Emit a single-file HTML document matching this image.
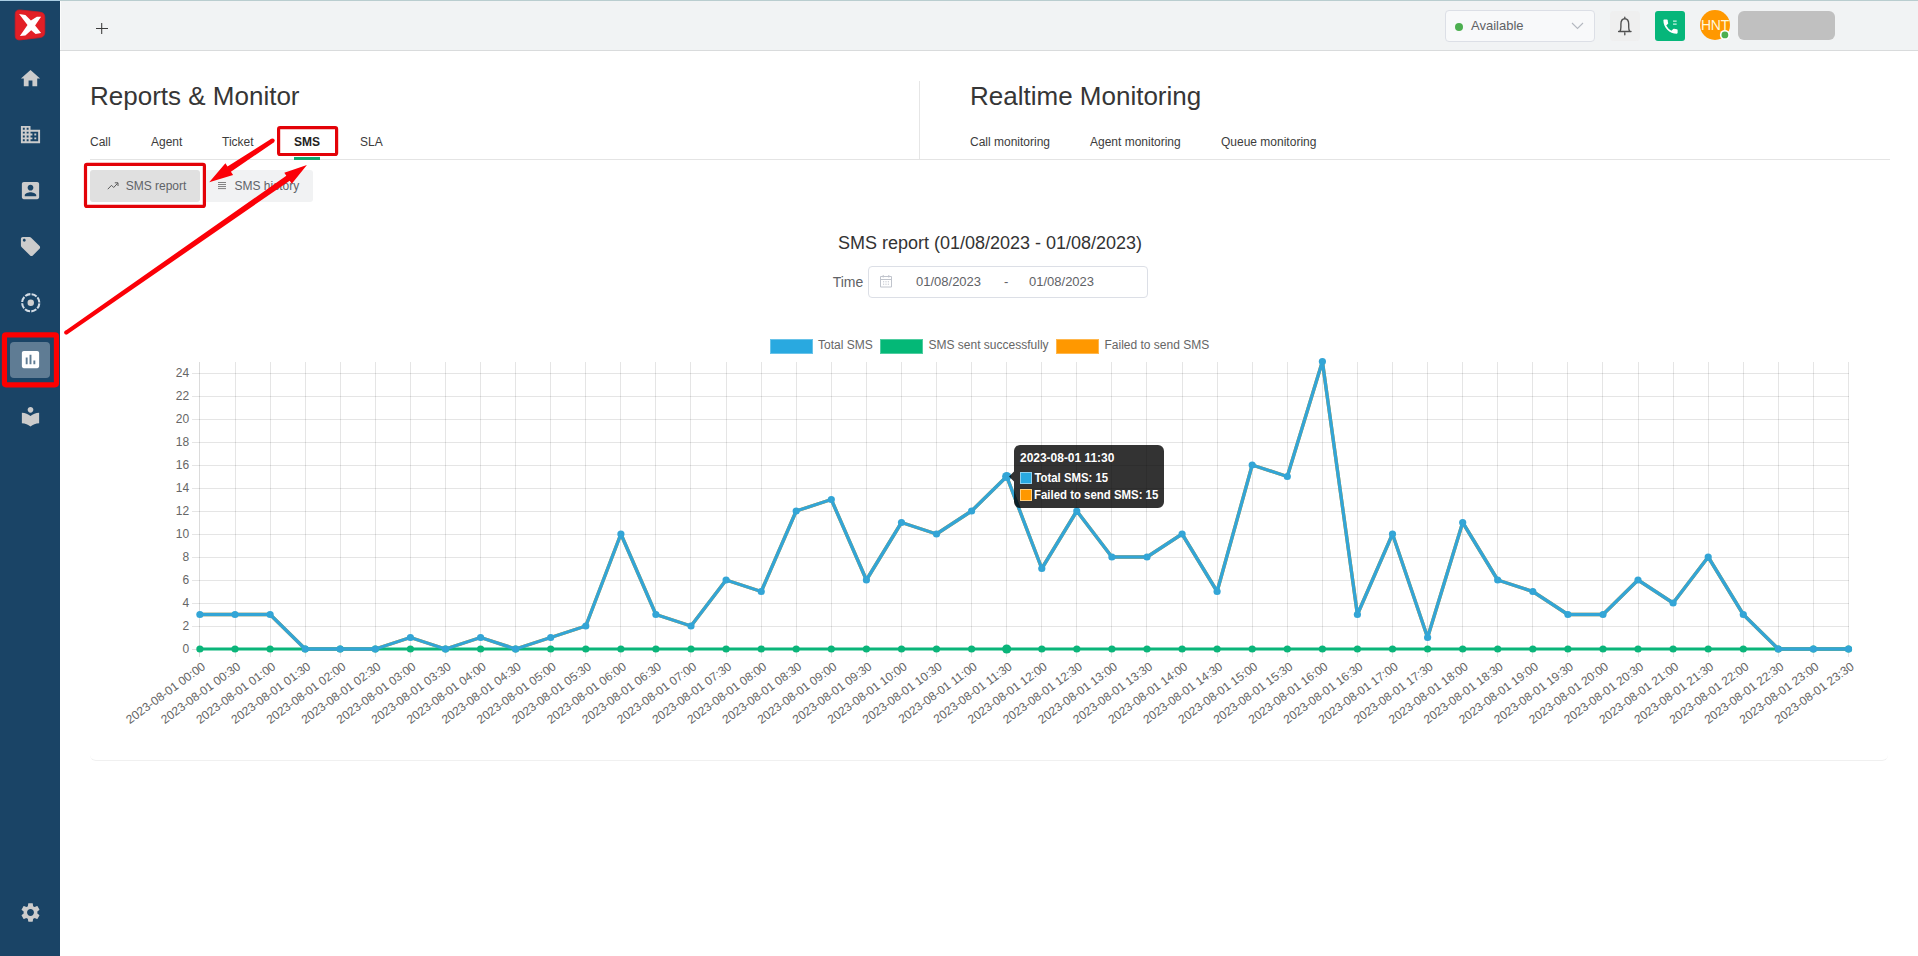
<!DOCTYPE html>
<html lang="en"><head><meta charset="utf-8"><title>Reports &amp; Monitor</title>
<style>
html,body{margin:0;padding:0}
body{width:1918px;height:956px;overflow:hidden;position:relative;background:#fff;font-family:"Liberation Sans",Arial,sans-serif;color:#333}
.abs,.si,.chart,.anno{position:absolute}
#side{position:absolute;left:0;top:0;width:60px;height:956px;background:#1a4466}
.act{position:absolute;left:10px;top:342px;width:40px;height:36px;border-radius:4px;background:rgba(255,255,255,0.3)}
#top{position:absolute;left:60px;top:0;width:1858px;height:50px;background:#f1f3f4;border-bottom:1px solid #d9dbdc;border-top:1px solid #b9cdcf;box-sizing:content-box;height:49px}
.t{position:absolute;white-space:nowrap;line-height:1}
.h1{font-size:26px;color:#363636}
.tab{font-size:12px;color:#3c3c3c}
.chart{left:0;top:0}
.chart .ax text{font-size:12px;fill:#666;font-family:"Liberation Sans",Arial,sans-serif}
.chart .tip text{font-size:12px;fill:#fff;font-family:"Liberation Sans",Arial,sans-serif}
.lg{top:338.500px;width:43px;height:15px;box-shadow:inset 0 0 0 1px rgba(255,255,255,0.3)}
.btn{position:absolute;top:170px;height:32px;border-radius:3px;box-sizing:border-box}
</style></head><body>
<div id="side">
<svg class="si" style="left:0;top:0" width="60" height="50" viewBox="0 0 60 50"><path d="M20.200 10 L39.800 12.100 Q44.800 12.600 44.800 17.500 L44.800 32.300 Q44.800 37 39.800 37.600 L20.200 39.900 Q15.200 40.400 15.200 35.400 L15.200 14.500 Q15.200 9.500 20.200 10Z" fill="#e21f26" stroke="#cf1c24" stroke-width="0.800"/><path d="M19.100 13.900L25.400 14.900L30.900 20.400L36.900 16.700L41.100 16.700L35.100 25.400L41.100 32.900L35.600 34L31.200 30.300L25.400 35.600L19.900 36.100L27.500 25.100Z" fill="#fff"/></svg>
<svg class="si" style="top:67.20px;left:18.50px" width="23" height="23" viewBox="0 0 24 24"><path fill="#ccc" d="M10 20v-6h4v6h5v-8h3L12 3 2 12h3v8z"/></svg>
<svg class="si" style="top:122.90px;left:18.50px" width="23" height="23" viewBox="0 0 24 24"><path fill="#ccc" d="M12 7V3H2v18h20V7H12zM6 19H4v-2h2v2zm0-4H4v-2h2v2zm0-4H4V9h2v2zm0-4H4V5h2v2zm4 12H8v-2h2v2zm0-4H8v-2h2v2zm0-4H8V9h2v2zm0-4H8V5h2v2zm10 12h-8v-2h2v-2h-2v-2h2v-2h-2V9h8v10zm-2-8h-2v2h2v-2zm0 4h-2v2h2v-2z"/></svg>
<svg class="si" style="top:179.00px;left:18.50px" width="23" height="23" viewBox="0 0 24 24"><path fill="#ccc" d="M3 5v14c0 1.1.89 2 2 2h14c1.1 0 2-.9 2-2V5c0-1.1-.9-2-2-2H5c-1.11 0-2 .9-2 2zm12 4c0 1.66-1.34 3-3 3s-3-1.34-3-3 1.34-3 3-3 3 1.34 3 3zm-9 8c0-2 4-3.1 6-3.1s6 1.1 6 3.100v1H6v-1z"/></svg>
<svg class="si" style="top:235.10px;left:18.50px" width="23" height="23" viewBox="0 0 24 24"><path fill="#ccc" d="M21.410 11.580l-9-9C12.050 2.220 11.550 2 11 2H4c-1.100 0-2 .9-2 2v7c0 .55.22 1.050.59 1.420l9 9c.36.36.86.58 1.410.58.55 0 1.050-.22 1.410-.59l7-7c.37-.36.59-.86.59-1.410 0-.55-.23-1.060-.59-1.420zM5.500 7C4.670 7 4 6.330 4 5.500S4.670 4 5.500 4 7 4.670 7 5.500 6.330 7 5.500 7z"/></svg>
<svg class="si" style="top:290.6px;left:18.95px" width="23.5" height="23.5" viewBox="0 0 24 24"><circle cx="12" cy="12" r="8.8" fill="none" stroke="#d4dde6" stroke-width="2.1" stroke-dasharray="5.6 1.31" stroke-dashoffset="-0.655"/><circle cx="12" cy="12" r="3.3" fill="#d0d0d0"/></svg>
<div class="act"></div>
<svg class="si" style="top:347.80px;left:18.50px" width="23" height="23" viewBox="0 0 24 24"><path fill="#fff" d="M19 3H5c-1.100 0-2 .9-2 2v14c0 1.100.9 2 2 2h14c1.100 0 2-.9 2-2V5c0-1.100-.9-2-2-2zM9 17H7v-7h2v7zm4 0h-2V7h2v10zm4 0h-2v-4h2v4z"/></svg>
<svg class="si" style="top:405.20px;left:18.50px" width="23" height="23" viewBox="0 0 24 24"><path fill="#ccc" d="M12 11.550C9.640 9.350 6.480 8 3 8v11c3.480 0 6.640 1.350 9 3.550 2.360-2.190 5.520-3.550 9-3.550V8c-3.480 0-6.640 1.350-9 3.550zM12 8c1.660 0 3-1.340 3-3s-1.340-3-3-3-3 1.340-3 3 1.340 3 3 3z"/></svg>
<svg class="si" style="top:901.20px;left:18.50px" width="23" height="23" viewBox="0 0 24 24"><path fill="#ccc" d="M19.140 12.940c.04-.3.06-.61.06-.94 0-.32-.02-.64-.07-.94l2.030-1.580c.18-.14.23-.41.12-.61l-1.920-3.320c-.12-.22-.37-.29-.59-.22l-2.390.96c-.5-.38-1.030-.7-1.620-.94l-.36-2.540c-.04-.24-.24-.41-.48-.41h-3.840c-.24 0-.43.17-.47.41l-.36 2.540c-.59.24-1.130.57-1.620.94l-2.390-.96c-.22-.08-.47 0-.59.22L2.740 8.870c-.12.21-.08.47.12.61l2.030 1.580c-.05.3-.09.63-.09.94s.02.64.07.94l-2.030 1.580c-.18.14-.23.41-.12.61l1.920 3.320c.12.22.37.29.59.22l2.390-.96c.5.38 1.030.7 1.620.94l.36 2.540c.05.24.24.41.48.41h3.840c.24 0 .44-.17.47-.41l.36-2.540c.59-.24 1.130-.56 1.620-.94l2.390.96c.22.08.47 0 .59-.22l1.920-3.320c.12-.22.07-.47-.12-.61l-2.010-1.580zM12 15.600c-1.980 0-3.600-1.620-3.600-3.600s1.620-3.600 3.600-3.600 3.600 1.620 3.600 3.600-1.620 3.600-3.600 3.600z"/></svg>
</div>
<div id="top"></div>
<div class="abs" style="left:0;top:0;width:60px;height:1px;background:#a9cde3"></div>
<div class="abs" style="left:60px;top:1px;width:1px;height:49px;background:#fbfcfc"></div>
<svg class="abs" style="left:96px;top:23px" width="12" height="12" viewBox="0 0 12 12"><path d="M5.700 0v11M0 5.500h12" stroke="#3c3c3c" stroke-width="1.050" fill="none"/></svg>

<div class="abs" style="left:1445px;top:10px;width:150px;height:31.500px;box-sizing:border-box;border:1px solid #dcdfe6;border-radius:4px;background:#f8f9fa"></div>
<div class="abs" style="left:1455px;top:23px;width:8px;height:8px;border-radius:50%;background:#4caf50"></div>
<div class="t" style="left:1471px;top:19px;font-size:13px;color:#606266">Available</div>
<svg class="abs" style="left:1571px;top:22px" width="13" height="8" viewBox="0 0 13 8"><path d="M1 1l5.500 5.500L12 1" fill="none" stroke="#b4b8c0" stroke-width="1.100"/></svg>

<div class="abs" style="left:1610px;top:11px;width:30px;height:30px;border-radius:4px;background:#efefef"></div>
<svg class="abs" style="left:1616px;top:16px" width="18" height="20" viewBox="0 0 18 20"><path d="M8.8 1.2v1.5M3.9 15.4c.9-1.2 1-2.6 1-4.400V8.2c0-3.300 1.500-5.500 3.900-5.500s3.900 2.200 3.900 5.500V11c0 1.800.1 3.200 1 4.400M2.600 15.500h12.400M8.800 17v1.700" fill="none" stroke="#505050" stroke-width="1.350" stroke-linecap="round"/></svg>

<div class="abs" style="left:1655px;top:11px;width:30px;height:30px;border-radius:3px;background:#06b67a"></div>
<svg class="abs" style="left:1660.600px;top:16.800px" width="19" height="19" viewBox="0 0 24 24"><path fill="#fff" d="M20 15.500c-1.250 0-2.450-.2-3.570-.57a1.020 1.020 0 0 0-1.020.24l-2.200 2.200a15.045 15.045 0 0 1-6.590-6.590l2.200-2.210a.96.960 0 0 0 .25-1A11.360 11.360 0 0 1 8.500 4c0-.55-.45-1-1-1H4c-.55 0-1 .45-1 1 0 9.390 7.610 17 17 17 .55 0 1-.45 1-1v-3.500c0-.55-.45-1-1-1z"/><path d="M15.200 5.200h4.600M15.200 9.100h4.600" stroke="#c8f3e2" stroke-width="1.600" fill="none"/></svg>

<div class="abs" style="left:1700px;top:10px;width:30px;height:30px;border-radius:50%;background:#ff9800"></div>
<div class="t" style="left:1700px;top:18px;width:30px;text-align:center;font-size:14px;color:#fff7dc;letter-spacing:-0.2px">HNT</div>
<svg class="abs" style="left:1719px;top:29px" width="12" height="12" viewBox="0 0 12 12"><circle cx="5.900" cy="5.900" r="5" fill="#fff"/><circle cx="5.900" cy="5.900" r="3.400" fill="#4caf50"/></svg>
<div class="abs" style="left:1738px;top:11px;width:97px;height:29px;border-radius:6px;background:#c0c0c0"></div>

<div class="t h1" style="left:90px;top:83px">Reports &amp; Monitor</div>
<div class="t h1" style="left:970px;top:83px">Realtime Monitoring</div>
<div class="abs" style="left:919px;top:81px;width:1px;height:78px;background:#e6e6e6"></div>
<div class="abs" style="left:90px;top:159px;width:1800px;height:1px;background:#e4e4e4"></div>
<div class="t tab" style="left:90px;top:136px">Call</div>
<div class="t tab" style="left:151px;top:136px">Agent</div>
<div class="t tab" style="left:222px;top:136px">Ticket</div>
<div class="t tab" style="left:294px;top:136px;font-weight:bold;color:#222">SMS</div>
<div class="t tab" style="left:360px;top:136px">SLA</div>
<div class="abs" style="left:294px;top:157px;width:26px;height:3px;background:#10a870"></div>
<div class="t tab" style="left:970px;top:136px">Call monitoring</div>
<div class="t tab" style="left:1090px;top:136px">Agent monitoring</div>
<div class="t tab" style="left:1221px;top:136px">Queue monitoring</div>

<div class="btn" style="left:90px;width:110px;background:#e0e0e0"></div>
<div class="btn" style="left:204px;width:109px;background:#f1f2f3"></div>
<svg class="abs" style="left:107.400px;top:180.800px" width="12" height="10" viewBox="0 0 12 10"><path d="M0.800 8.200l3.700-3.900 2.200 2.200 4-4.300M7.800 1.800h3.200v3.200" fill="none" stroke="#5a5a5a" stroke-width="1"/></svg>
<div class="t" style="left:125.700px;top:180px;font-size:12px;color:#5f6368">SMS report</div>
<svg class="abs" style="left:217px;top:181px" width="10" height="9" viewBox="0 0 10 9"><path d="M1 1.500h8M1 3.530h8M1 5.560h8M1 7.600h8" fill="none" stroke="#5c5c5c" stroke-width="0.750"/></svg>
<div class="t" style="left:234.500px;top:180px;font-size:12px;color:#5f6368">SMS history</div>

<div class="t" style="left:690px;top:234px;width:600px;text-align:center;font-size:18px;color:#333">SMS report (01/08/2023 - 01/08/2023)</div>
<div class="t" style="left:832.700px;top:275px;font-size:14px;color:#606266">Time</div>
<div class="abs" style="left:868px;top:266px;width:280px;height:32px;box-sizing:border-box;border:1px solid #dcdfe6;border-radius:4px;background:#fff"></div>
<svg class="abs" style="left:879px;top:274px" width="14" height="14" viewBox="0 0 14 14"><path d="M1.500 2.500h11v10.500h-11zM1.500 5.500h11M4.200 1v2.500M9.800 1v2.500M4 7.800h1.200M6.400 7.800h1.200M8.800 7.800h1.200M4 10.200h1.200M6.400 10.200h1.200M8.800 10.200h1.200" fill="none" stroke="#c0c4cc" stroke-width="1"/></svg>
<div class="t" style="left:916px;top:275px;font-size:13px;color:#606266">01/08/2023</div>
<div class="t" style="left:1004px;top:275px;font-size:13px;color:#606266">-</div>
<div class="t" style="left:1029px;top:275px;font-size:13px;color:#606266">01/08/2023</div>

<div class="abs lg" style="left:770px;background:#29a9e0"></div>
<div class="t" style="left:818px;top:338.600px;font-size:12px;color:#666">Total SMS</div>
<div class="abs lg" style="left:880px;background:#04b877"></div>
<div class="t" style="left:928.500px;top:338.600px;font-size:12px;color:#666">SMS sent successfully</div>
<div class="abs lg" style="left:1056px;background:#ff9800"></div>
<div class="t" style="left:1104.500px;top:338.600px;font-size:12px;color:#666">Failed to send SMS</div>

<div class="abs" style="left:90px;top:740px;width:1798px;height:20px;border-bottom:1px solid #f0f0f0;border-radius:0 0 6px 6px"></div>
<svg class="chart" width="1918" height="956" viewBox="0 0 1918 956">
<g shape-rendering="crispEdges"><line x1="199.5" y1="362" x2="199.5" y2="657" stroke="rgba(0,0,0,0.14)"/><line x1="235.5" y1="362" x2="235.5" y2="657" stroke="rgba(0,0,0,0.1)"/><line x1="270.5" y1="362" x2="270.5" y2="657" stroke="rgba(0,0,0,0.1)"/><line x1="305.5" y1="362" x2="305.5" y2="657" stroke="rgba(0,0,0,0.1)"/><line x1="340.5" y1="362" x2="340.5" y2="657" stroke="rgba(0,0,0,0.1)"/><line x1="375.5" y1="362" x2="375.5" y2="657" stroke="rgba(0,0,0,0.1)"/><line x1="410.5" y1="362" x2="410.5" y2="657" stroke="rgba(0,0,0,0.1)"/><line x1="445.5" y1="362" x2="445.5" y2="657" stroke="rgba(0,0,0,0.1)"/><line x1="480.5" y1="362" x2="480.5" y2="657" stroke="rgba(0,0,0,0.1)"/><line x1="515.5" y1="362" x2="515.5" y2="657" stroke="rgba(0,0,0,0.1)"/><line x1="550.5" y1="362" x2="550.5" y2="657" stroke="rgba(0,0,0,0.1)"/><line x1="585.5" y1="362" x2="585.5" y2="657" stroke="rgba(0,0,0,0.1)"/><line x1="620.5" y1="362" x2="620.5" y2="657" stroke="rgba(0,0,0,0.1)"/><line x1="655.5" y1="362" x2="655.5" y2="657" stroke="rgba(0,0,0,0.1)"/><line x1="690.5" y1="362" x2="690.5" y2="657" stroke="rgba(0,0,0,0.1)"/><line x1="726.5" y1="362" x2="726.5" y2="657" stroke="rgba(0,0,0,0.1)"/><line x1="761.5" y1="362" x2="761.5" y2="657" stroke="rgba(0,0,0,0.1)"/><line x1="796.5" y1="362" x2="796.5" y2="657" stroke="rgba(0,0,0,0.1)"/><line x1="831.5" y1="362" x2="831.5" y2="657" stroke="rgba(0,0,0,0.1)"/><line x1="866.5" y1="362" x2="866.5" y2="657" stroke="rgba(0,0,0,0.1)"/><line x1="901.5" y1="362" x2="901.5" y2="657" stroke="rgba(0,0,0,0.1)"/><line x1="936.5" y1="362" x2="936.5" y2="657" stroke="rgba(0,0,0,0.1)"/><line x1="971.5" y1="362" x2="971.5" y2="657" stroke="rgba(0,0,0,0.1)"/><line x1="1006.5" y1="362" x2="1006.5" y2="657" stroke="rgba(0,0,0,0.1)"/><line x1="1041.5" y1="362" x2="1041.5" y2="657" stroke="rgba(0,0,0,0.1)"/><line x1="1076.5" y1="362" x2="1076.5" y2="657" stroke="rgba(0,0,0,0.1)"/><line x1="1111.5" y1="362" x2="1111.5" y2="657" stroke="rgba(0,0,0,0.1)"/><line x1="1146.5" y1="362" x2="1146.5" y2="657" stroke="rgba(0,0,0,0.1)"/><line x1="1182.5" y1="362" x2="1182.5" y2="657" stroke="rgba(0,0,0,0.1)"/><line x1="1217.5" y1="362" x2="1217.5" y2="657" stroke="rgba(0,0,0,0.1)"/><line x1="1252.5" y1="362" x2="1252.5" y2="657" stroke="rgba(0,0,0,0.1)"/><line x1="1287.5" y1="362" x2="1287.5" y2="657" stroke="rgba(0,0,0,0.1)"/><line x1="1322.5" y1="362" x2="1322.5" y2="657" stroke="rgba(0,0,0,0.1)"/><line x1="1357.5" y1="362" x2="1357.5" y2="657" stroke="rgba(0,0,0,0.1)"/><line x1="1392.5" y1="362" x2="1392.5" y2="657" stroke="rgba(0,0,0,0.1)"/><line x1="1427.5" y1="362" x2="1427.5" y2="657" stroke="rgba(0,0,0,0.1)"/><line x1="1462.5" y1="362" x2="1462.5" y2="657" stroke="rgba(0,0,0,0.1)"/><line x1="1497.5" y1="362" x2="1497.5" y2="657" stroke="rgba(0,0,0,0.1)"/><line x1="1532.5" y1="362" x2="1532.5" y2="657" stroke="rgba(0,0,0,0.1)"/><line x1="1567.5" y1="362" x2="1567.5" y2="657" stroke="rgba(0,0,0,0.1)"/><line x1="1602.5" y1="362" x2="1602.5" y2="657" stroke="rgba(0,0,0,0.1)"/><line x1="1638.5" y1="362" x2="1638.5" y2="657" stroke="rgba(0,0,0,0.1)"/><line x1="1673.5" y1="362" x2="1673.5" y2="657" stroke="rgba(0,0,0,0.1)"/><line x1="1708.5" y1="362" x2="1708.5" y2="657" stroke="rgba(0,0,0,0.1)"/><line x1="1743.5" y1="362" x2="1743.5" y2="657" stroke="rgba(0,0,0,0.1)"/><line x1="1778.5" y1="362" x2="1778.5" y2="657" stroke="rgba(0,0,0,0.1)"/><line x1="1813.5" y1="362" x2="1813.5" y2="657" stroke="rgba(0,0,0,0.1)"/><line x1="1848.5" y1="362" x2="1848.5" y2="657" stroke="rgba(0,0,0,0.1)"/><line x1="192" y1="649.5" x2="1849" y2="649.5" stroke="rgba(0,0,0,0.12)"/><line x1="192" y1="626.5" x2="1849" y2="626.5" stroke="rgba(0,0,0,0.1)"/><line x1="192" y1="603.5" x2="1849" y2="603.5" stroke="rgba(0,0,0,0.1)"/><line x1="192" y1="580.5" x2="1849" y2="580.5" stroke="rgba(0,0,0,0.1)"/><line x1="192" y1="557.5" x2="1849" y2="557.5" stroke="rgba(0,0,0,0.1)"/><line x1="192" y1="534.5" x2="1849" y2="534.5" stroke="rgba(0,0,0,0.1)"/><line x1="192" y1="511.5" x2="1849" y2="511.5" stroke="rgba(0,0,0,0.1)"/><line x1="192" y1="488.5" x2="1849" y2="488.5" stroke="rgba(0,0,0,0.1)"/><line x1="192" y1="465.5" x2="1849" y2="465.5" stroke="rgba(0,0,0,0.1)"/><line x1="192" y1="442.5" x2="1849" y2="442.5" stroke="rgba(0,0,0,0.1)"/><line x1="192" y1="419.5" x2="1849" y2="419.5" stroke="rgba(0,0,0,0.1)"/><line x1="192" y1="396.5" x2="1849" y2="396.5" stroke="rgba(0,0,0,0.1)"/><line x1="192" y1="373.5" x2="1849" y2="373.5" stroke="rgba(0,0,0,0.1)"/></g>
<g class="ax"><text x="189.100" y="652.6" text-anchor="end">0</text><text x="189.100" y="629.6" text-anchor="end">2</text><text x="189.100" y="606.6" text-anchor="end">4</text><text x="189.100" y="583.6" text-anchor="end">6</text><text x="189.100" y="560.6" text-anchor="end">8</text><text x="189.100" y="537.6" text-anchor="end">10</text><text x="189.100" y="514.6" text-anchor="end">12</text><text x="189.100" y="491.6" text-anchor="end">14</text><text x="189.100" y="468.6" text-anchor="end">16</text><text x="189.100" y="445.6" text-anchor="end">18</text><text x="189.100" y="422.6" text-anchor="end">20</text><text x="189.100" y="399.6" text-anchor="end">22</text><text x="189.100" y="376.6" text-anchor="end">24</text></g>
<g class="ax"><text transform="translate(206.2,668.2) rotate(-36.2)" text-anchor="end">2023-08-01 00:00</text><text transform="translate(241.3,668.2) rotate(-36.2)" text-anchor="end">2023-08-01 00:30</text><text transform="translate(276.4,668.2) rotate(-36.2)" text-anchor="end">2023-08-01 01:00</text><text transform="translate(311.5,668.2) rotate(-36.2)" text-anchor="end">2023-08-01 01:30</text><text transform="translate(346.6,668.2) rotate(-36.2)" text-anchor="end">2023-08-01 02:00</text><text transform="translate(381.6,668.2) rotate(-36.2)" text-anchor="end">2023-08-01 02:30</text><text transform="translate(416.7,668.2) rotate(-36.2)" text-anchor="end">2023-08-01 03:00</text><text transform="translate(451.8,668.2) rotate(-36.2)" text-anchor="end">2023-08-01 03:30</text><text transform="translate(486.9,668.2) rotate(-36.2)" text-anchor="end">2023-08-01 04:00</text><text transform="translate(521.9,668.2) rotate(-36.2)" text-anchor="end">2023-08-01 04:30</text><text transform="translate(557.0,668.2) rotate(-36.2)" text-anchor="end">2023-08-01 05:00</text><text transform="translate(592.1,668.2) rotate(-36.2)" text-anchor="end">2023-08-01 05:30</text><text transform="translate(627.1,668.2) rotate(-36.2)" text-anchor="end">2023-08-01 06:00</text><text transform="translate(662.2,668.2) rotate(-36.2)" text-anchor="end">2023-08-01 06:30</text><text transform="translate(697.3,668.2) rotate(-36.2)" text-anchor="end">2023-08-01 07:00</text><text transform="translate(732.4,668.2) rotate(-36.2)" text-anchor="end">2023-08-01 07:30</text><text transform="translate(767.5,668.2) rotate(-36.2)" text-anchor="end">2023-08-01 08:00</text><text transform="translate(802.5,668.2) rotate(-36.2)" text-anchor="end">2023-08-01 08:30</text><text transform="translate(837.6,668.2) rotate(-36.2)" text-anchor="end">2023-08-01 09:00</text><text transform="translate(872.7,668.2) rotate(-36.2)" text-anchor="end">2023-08-01 09:30</text><text transform="translate(907.8,668.2) rotate(-36.2)" text-anchor="end">2023-08-01 10:00</text><text transform="translate(942.8,668.2) rotate(-36.2)" text-anchor="end">2023-08-01 10:30</text><text transform="translate(977.9,668.2) rotate(-36.2)" text-anchor="end">2023-08-01 11:00</text><text transform="translate(1013.0,668.2) rotate(-36.2)" text-anchor="end">2023-08-01 11:30</text><text transform="translate(1048.0,668.2) rotate(-36.2)" text-anchor="end">2023-08-01 12:00</text><text transform="translate(1083.1,668.2) rotate(-36.2)" text-anchor="end">2023-08-01 12:30</text><text transform="translate(1118.2,668.2) rotate(-36.2)" text-anchor="end">2023-08-01 13:00</text><text transform="translate(1153.3,668.2) rotate(-36.2)" text-anchor="end">2023-08-01 13:30</text><text transform="translate(1188.4,668.2) rotate(-36.2)" text-anchor="end">2023-08-01 14:00</text><text transform="translate(1223.4,668.2) rotate(-36.2)" text-anchor="end">2023-08-01 14:30</text><text transform="translate(1258.5,668.2) rotate(-36.2)" text-anchor="end">2023-08-01 15:00</text><text transform="translate(1293.6,668.2) rotate(-36.2)" text-anchor="end">2023-08-01 15:30</text><text transform="translate(1328.7,668.2) rotate(-36.2)" text-anchor="end">2023-08-01 16:00</text><text transform="translate(1363.7,668.2) rotate(-36.2)" text-anchor="end">2023-08-01 16:30</text><text transform="translate(1398.8,668.2) rotate(-36.2)" text-anchor="end">2023-08-01 17:00</text><text transform="translate(1433.9,668.2) rotate(-36.2)" text-anchor="end">2023-08-01 17:30</text><text transform="translate(1469.0,668.2) rotate(-36.2)" text-anchor="end">2023-08-01 18:00</text><text transform="translate(1504.0,668.2) rotate(-36.2)" text-anchor="end">2023-08-01 18:30</text><text transform="translate(1539.1,668.2) rotate(-36.2)" text-anchor="end">2023-08-01 19:00</text><text transform="translate(1574.2,668.2) rotate(-36.2)" text-anchor="end">2023-08-01 19:30</text><text transform="translate(1609.2,668.2) rotate(-36.2)" text-anchor="end">2023-08-01 20:00</text><text transform="translate(1644.3,668.2) rotate(-36.2)" text-anchor="end">2023-08-01 20:30</text><text transform="translate(1679.4,668.2) rotate(-36.2)" text-anchor="end">2023-08-01 21:00</text><text transform="translate(1714.5,668.2) rotate(-36.2)" text-anchor="end">2023-08-01 21:30</text><text transform="translate(1749.6,668.2) rotate(-36.2)" text-anchor="end">2023-08-01 22:00</text><text transform="translate(1784.6,668.2) rotate(-36.2)" text-anchor="end">2023-08-01 22:30</text><text transform="translate(1819.7,668.2) rotate(-36.2)" text-anchor="end">2023-08-01 23:00</text><text transform="translate(1854.8,668.2) rotate(-36.2)" text-anchor="end">2023-08-01 23:30</text></g>
<polyline points="199.9,614.5 235.0,614.5 270.1,614.5 305.2,649.0 340.2,649.0 375.3,649.0 410.4,637.5 445.5,649.0 480.6,637.5 515.6,649.0 550.7,637.5 585.8,626.0 620.9,534.0 655.9,614.5 691.0,626.0 726.1,580.0 761.2,591.5 796.2,511.0 831.3,499.5 866.4,580.0 901.5,522.5 936.5,534.0 971.6,511.0 1006.7,476.5 1041.8,568.5 1076.8,511.0 1111.9,557.0 1147.0,557.0 1182.1,534.0 1217.1,591.5 1252.2,465.0 1287.3,476.5 1322.4,361.5 1357.4,614.5 1392.5,534.0 1427.6,637.5 1462.7,522.5 1497.7,580.0 1532.8,591.5 1567.9,614.5 1603.0,614.5 1638.0,580.0 1673.1,603.0 1708.2,557.0 1743.3,614.5 1778.3,649.0 1813.4,649.0 1848.5,649.0" fill="none" stroke="#ff9800" stroke-width="3.400" stroke-linejoin="round"/>
<line x1="199.95" y1="649.05" x2="1848.4750000000001" y2="649.05" stroke="#0bb57a" stroke-width="3"/>
<g fill="#0bb57a"><circle cx="199.9" cy="649.0" r="3.6"/><circle cx="235.0" cy="649.0" r="3.6"/><circle cx="270.1" cy="649.0" r="3.6"/><circle cx="305.2" cy="649.0" r="3.6"/><circle cx="340.2" cy="649.0" r="3.6"/><circle cx="375.3" cy="649.0" r="3.6"/><circle cx="410.4" cy="649.0" r="3.6"/><circle cx="445.5" cy="649.0" r="3.6"/><circle cx="480.6" cy="649.0" r="3.6"/><circle cx="515.6" cy="649.0" r="3.6"/><circle cx="550.7" cy="649.0" r="3.6"/><circle cx="585.8" cy="649.0" r="3.6"/><circle cx="620.9" cy="649.0" r="3.6"/><circle cx="655.9" cy="649.0" r="3.6"/><circle cx="691.0" cy="649.0" r="3.6"/><circle cx="726.1" cy="649.0" r="3.6"/><circle cx="761.2" cy="649.0" r="3.6"/><circle cx="796.2" cy="649.0" r="3.6"/><circle cx="831.3" cy="649.0" r="3.6"/><circle cx="866.4" cy="649.0" r="3.6"/><circle cx="901.5" cy="649.0" r="3.6"/><circle cx="936.5" cy="649.0" r="3.6"/><circle cx="971.6" cy="649.0" r="3.6"/><circle cx="1006.7" cy="649.0" r="4.6"/><circle cx="1041.8" cy="649.0" r="3.6"/><circle cx="1076.8" cy="649.0" r="3.6"/><circle cx="1111.9" cy="649.0" r="3.6"/><circle cx="1147.0" cy="649.0" r="3.6"/><circle cx="1182.1" cy="649.0" r="3.6"/><circle cx="1217.1" cy="649.0" r="3.6"/><circle cx="1252.2" cy="649.0" r="3.6"/><circle cx="1287.3" cy="649.0" r="3.6"/><circle cx="1322.4" cy="649.0" r="3.6"/><circle cx="1357.4" cy="649.0" r="3.6"/><circle cx="1392.5" cy="649.0" r="3.6"/><circle cx="1427.6" cy="649.0" r="3.6"/><circle cx="1462.7" cy="649.0" r="3.6"/><circle cx="1497.7" cy="649.0" r="3.6"/><circle cx="1532.8" cy="649.0" r="3.6"/><circle cx="1567.9" cy="649.0" r="3.6"/><circle cx="1603.0" cy="649.0" r="3.6"/><circle cx="1638.0" cy="649.0" r="3.6"/><circle cx="1673.1" cy="649.0" r="3.6"/><circle cx="1708.2" cy="649.0" r="3.6"/><circle cx="1743.3" cy="649.0" r="3.6"/><circle cx="1778.3" cy="649.0" r="3.6"/><circle cx="1813.4" cy="649.0" r="3.6"/><circle cx="1848.5" cy="649.0" r="3.6"/></g>
<polyline points="199.9,614.5 235.0,614.5 270.1,614.5 305.2,649.0 340.2,649.0 375.3,649.0 410.4,637.5 445.5,649.0 480.6,637.5 515.6,649.0 550.7,637.5 585.8,626.0 620.9,534.0 655.9,614.5 691.0,626.0 726.1,580.0 761.2,591.5 796.2,511.0 831.3,499.5 866.4,580.0 901.5,522.5 936.5,534.0 971.6,511.0 1006.7,476.5 1041.8,568.5 1076.8,511.0 1111.9,557.0 1147.0,557.0 1182.1,534.0 1217.1,591.5 1252.2,465.0 1287.3,476.5 1322.4,361.5 1357.4,614.5 1392.5,534.0 1427.6,637.5 1462.7,522.5 1497.7,580.0 1532.8,591.5 1567.9,614.5 1603.0,614.5 1638.0,580.0 1673.1,603.0 1708.2,557.0 1743.3,614.5 1778.3,649.0 1813.4,649.0 1848.5,649.0" fill="none" stroke="#33a5d6" stroke-width="3.400" stroke-linejoin="round"/>
<g fill="#33a5d6"><circle cx="199.9" cy="614.5" r="3.6"/><circle cx="235.0" cy="614.5" r="3.6"/><circle cx="270.1" cy="614.5" r="3.6"/><circle cx="305.2" cy="649.0" r="3.6"/><circle cx="340.2" cy="649.0" r="3.6"/><circle cx="375.3" cy="649.0" r="3.6"/><circle cx="410.4" cy="637.5" r="3.6"/><circle cx="445.5" cy="649.0" r="3.6"/><circle cx="480.6" cy="637.5" r="3.6"/><circle cx="515.6" cy="649.0" r="3.6"/><circle cx="550.7" cy="637.5" r="3.6"/><circle cx="585.8" cy="626.0" r="3.6"/><circle cx="620.9" cy="534.0" r="3.6"/><circle cx="655.9" cy="614.5" r="3.6"/><circle cx="691.0" cy="626.0" r="3.6"/><circle cx="726.1" cy="580.0" r="3.6"/><circle cx="761.2" cy="591.5" r="3.6"/><circle cx="796.2" cy="511.0" r="3.6"/><circle cx="831.3" cy="499.5" r="3.6"/><circle cx="866.4" cy="580.0" r="3.6"/><circle cx="901.5" cy="522.5" r="3.6"/><circle cx="936.5" cy="534.0" r="3.6"/><circle cx="971.6" cy="511.0" r="3.6"/><circle cx="1006.7" cy="476.5" r="4.6"/><circle cx="1041.8" cy="568.5" r="3.6"/><circle cx="1076.8" cy="511.0" r="3.6"/><circle cx="1111.9" cy="557.0" r="3.6"/><circle cx="1147.0" cy="557.0" r="3.6"/><circle cx="1182.1" cy="534.0" r="3.6"/><circle cx="1217.1" cy="591.5" r="3.6"/><circle cx="1252.2" cy="465.0" r="3.6"/><circle cx="1287.3" cy="476.5" r="3.6"/><circle cx="1322.4" cy="361.5" r="3.6"/><circle cx="1357.4" cy="614.5" r="3.6"/><circle cx="1392.5" cy="534.0" r="3.6"/><circle cx="1427.6" cy="637.5" r="3.6"/><circle cx="1462.7" cy="522.5" r="3.6"/><circle cx="1497.7" cy="580.0" r="3.6"/><circle cx="1532.8" cy="591.5" r="3.6"/><circle cx="1567.9" cy="614.5" r="3.6"/><circle cx="1603.0" cy="614.5" r="3.6"/><circle cx="1638.0" cy="580.0" r="3.6"/><circle cx="1673.1" cy="603.0" r="3.6"/><circle cx="1708.2" cy="557.0" r="3.6"/><circle cx="1743.3" cy="614.5" r="3.6"/><circle cx="1778.3" cy="649.0" r="3.6"/><circle cx="1813.4" cy="649.0" r="3.6"/><circle cx="1848.5" cy="649.0" r="3.6"/></g>
<g class="tip">
<path d="M1020 445h138a6 6 0 0 1 6 6v51a6 6 0 0 1 -6 6h-138a6 6 0 0 1 -6 -6v-20.500l-5 -5l5 -5v-20.500a6 6 0 0 1 6 -6z" fill="rgba(0,0,0,0.8)"/>
<text x="1020" y="461.500" font-weight="bold" textLength="94.400" lengthAdjust="spacingAndGlyphs">2023-08-01 11:30</text>
<rect x="1020.500" y="472.500" width="11" height="11" fill="#29a9e0" stroke="#8fd0ee"/>
<text x="1034.500" y="481.600" font-weight="bold" textLength="73.500" lengthAdjust="spacingAndGlyphs">Total SMS: 15</text>
<rect x="1020.500" y="489.500" width="11" height="11" fill="#ff9800" stroke="#ffcf80"/>
<text x="1034" y="498.600" font-weight="bold" textLength="124.300" lengthAdjust="spacingAndGlyphs">Failed to send SMS: 15</text>
</g>
</svg>
<svg class="anno" style="left:0;top:0" width="1918" height="956" viewBox="0 0 1918 956">
<g fill="none" stroke="#e30208" stroke-width="3.200">
<rect x="278.600" y="127.700" width="58" height="26.800" rx="1.500"/>
<rect x="85.500" y="164.400" width="118.900" height="42" rx="1.500"/>
<rect x="4.450" y="334.800" width="52" height="50" stroke="#fe0000" stroke-width="5.200" rx="1.500"/>
</g>
<g fill="#fb0007">
<path d="M271.3 138.8L227.5 166.5L225.4 163.3L209.2 182.3L233.1 174.9L230.9 171.7L273.7 142.4Z"/><circle cx="272.5" cy="140.6" r="2.2"/>
<path d="M67.4 334.3L289.7 180.7L291.8 183.7L306.9 165.1L284.3 172.8L286.3 175.8L65.0 330.9Z"/><circle cx="66.2" cy="332.6" r="2.1"/>
</g>
</svg>
</body></html>
